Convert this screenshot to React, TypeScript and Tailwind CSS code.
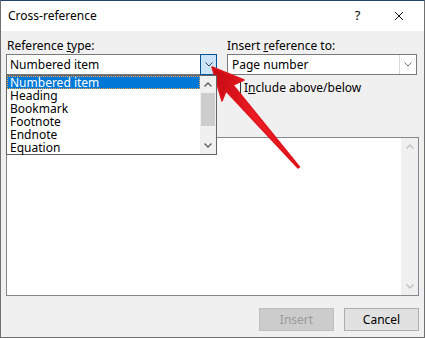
import React from 'react';

const ITEMS = ['Numbered item', 'Heading', 'Bookmark', 'Footnote', 'Endnote', 'Equation'];

function Chevron({ up = false, color = '#606060', w = 8, h = 5, sw = 1 }: { up?: boolean; color?: string; w?: number; h?: number; sw?: number }) {
  const pts = up ? `0.5,${h - 0.5} ${w / 2},1 ${w - 0.5},${h - 0.5}` : `0.5,0.5 ${w / 2},${h - 1} ${w - 0.5},0.5`;
  return (
    <svg width={w} height={h} viewBox={`0 0 ${w} ${h}`}>
      <polyline points={pts} fill="none" stroke={color} strokeWidth={sw} />
    </svg>
  );
}

function RedArrow() {
  return (
    <svg className="absolute -left-px -top-px pointer-events-none" width="425" height="338" viewBox="0 0 425 338">
      <defs>
        <linearGradient id="arw" x1="0" y1="0" x2="1" y2="0">
          <stop offset="0" stopColor="#c40a12" />
          <stop offset="0.5" stopColor="#ec1c24" />
          <stop offset="1" stopColor="#e0141c" />
        </linearGradient>
      </defs>
      <polygon
        points="212,67 244,80 233,85 299.5,167 298,168 226,91 222,101"
        fill="url(#arw)"
        stroke="#e0141c"
        strokeWidth="1.5"
        strokeLinejoin="round"
      />
    </svg>
  );
}

export default function App() {
  return (
    <div className="relative w-[425px] h-[338px] overflow-hidden flex flex-col border border-[#707070] border-t-[#24466e] bg-[#f0f0f0] text-[12px] text-black font-['Noto_Sans','Segoe_UI',sans-serif]">
      {/* title bar */}
      <div className="h-[30px] bg-white flex items-center pl-[7px] pr-[5px]">
        <span className="leading-none">Cross-reference</span>
        <div className="ml-auto flex h-full">
          <div className="w-[41px] h-full flex items-center justify-center text-[13px]">?</div>
          <div className="w-[41px] h-full flex items-center justify-center">
            <svg width="10" height="10" viewBox="0 0 10 10">
              <path d="M1 1 L9 9 M9 1 L1 9" stroke="#111" strokeWidth="1" fill="none" />
            </svg>
          </div>
        </div>
      </div>

      {/* body */}
      <div className="flex-1 flex flex-col pl-[5px] pt-[7px]">
        <div className="flex gap-[10px]">
          {/* left column */}
          <div className="w-[211px] flex flex-col">
            <div className="h-[15px] leading-[15px] pl-px">
              Reference <span className="underline">t</span>ype:
            </div>
            <div className="relative mt-px h-[21px] bg-white border border-[#7a7a7a] flex items-center pl-[3px]">
              <span>Numbered item</span>
              <div className="absolute -right-px -top-px w-[17px] h-[21px] bg-[#cce4f7] border border-[#005499] flex items-center justify-center">
                <Chevron color="#2c3e50" w={8} h={5} />
              </div>
              {/* open dropdown list */}
              <div className="absolute -left-px top-[20px] w-[211px] h-[80px] bg-white border border-[#646464] flex z-10">
                <div className="flex-1 flex flex-col">
                  {ITEMS.map((it, i) => (
                    <div
                      key={it}
                      className={
                        i === 0
                          ? 'h-[13px] leading-[13px] pl-[3px] bg-[#0078d7] text-white outline-1 outline-dotted outline-[#f0a64a] -outline-offset-1'
                          : 'h-[13px] leading-[13px] pl-[3px]'
                      }
                    >
                      {it}
                    </div>
                  ))}
                </div>
                <div className="w-[16px] bg-[#f0f0f0] flex flex-col">
                  <div className="h-[17px] flex items-center justify-center">
                    <Chevron up color="#606060" w={8} h={5} sw={1.4} />
                  </div>
                  <div className="h-[33px] mx-px bg-[#cdcdcd]" />
                  <div className="flex-1" />
                  <div className="h-[17px] flex items-center justify-center">
                    <Chevron color="#606060" w={8} h={5} sw={1.4} />
                  </div>
                </div>
              </div>
            </div>
          </div>

          {/* right column */}
          <div className="w-[190px] flex flex-col">
            <div className="h-[15px] leading-[15px]">
              Insert <span className="underline">r</span>eference to:
            </div>
            <div className="mt-px h-[21px] bg-white border border-[#7a7a7a] flex items-center pl-[4px]">
              <span>Page number</span>
              <div className="ml-auto w-[17px] h-full border-l border-[#dadada] flex items-center justify-center">
                <Chevron color="#707070" w={8} h={5} />
              </div>
            </div>
            <div className="mt-[6px] h-[13px] flex items-center pl-px">
              <div className="w-[13px] h-[13px] border border-[#333] bg-white" />
              <span className="ml-[3px] leading-[13px]">
                I<span className="underline">n</span>clude above/below
              </span>
            </div>
          </div>
        </div>

        {/* big list */}
        <div className="mt-[43px] w-[413px] h-[159px] bg-white border border-[#828790] flex">
          <div className="flex-1" />
          <div className="w-[17px] bg-[#f0f0f0] flex flex-col justify-between">
            <div className="h-[17px] flex items-center justify-center">
              <Chevron up color="#bfbfbf" w={8} h={5} sw={1.4} />
            </div>
            <div className="h-[17px] flex items-center justify-center">
              <Chevron color="#bfbfbf" w={8} h={5} sw={1.4} />
            </div>
          </div>
        </div>

        {/* buttons */}
        <div className="mt-[12px] w-[413px] flex justify-end gap-[10px]">
          <div className="w-[75px] h-[23px] bg-[#cccccc] border border-[#bfbfbf] flex items-center justify-center text-[#9a9a9a]">
            Insert
          </div>
          <div className="w-[75px] h-[23px] bg-[#e1e1e1] border border-[#adadad] flex items-center justify-center">
            Cancel
          </div>
        </div>
      </div>

      <RedArrow />
    </div>
  );
}
